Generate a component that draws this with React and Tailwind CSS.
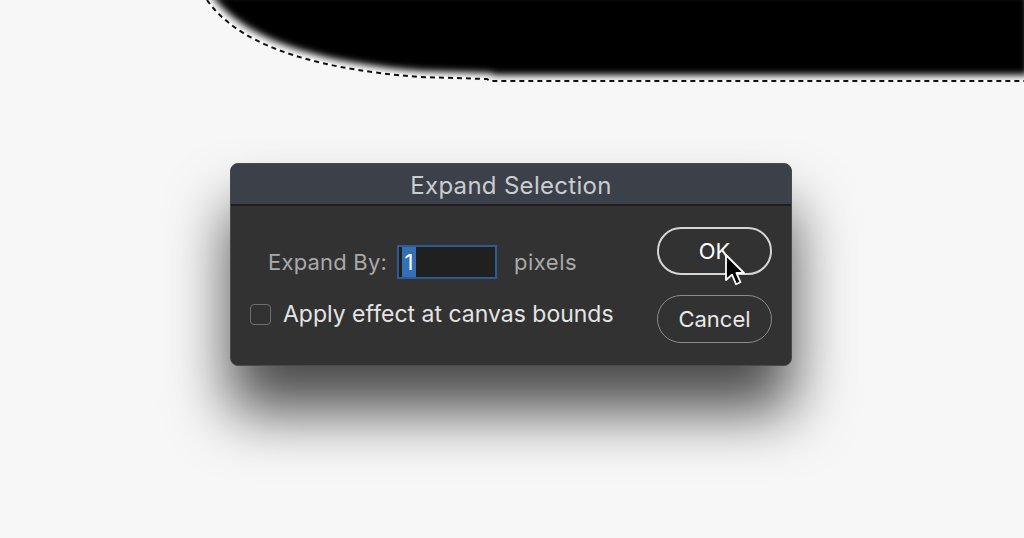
import React from 'react';

const font = { fontFamily: 'Inter, "Noto Sans", sans-serif' };

function Selection() {
  const edge = 'M207 0 C 235 40, 300 68, 420 77 L 487 79 L 490 81 L 1024 81';
  return (
    <svg className="absolute left-0 top-0" width="1024" height="100" viewBox="0 0 1024 100">
      <defs>
        <filter id="soft" x="-10%" y="-50%" width="120%" height="200%">
          <feGaussianBlur stdDeviation="3.5" />
        </filter>
      </defs>
      <path d={`${edge} L 1024 0 Z`} fill="#000" filter="url(#soft)" transform="translate(4 -6)" />
      <path d={edge} fill="none" stroke="#fff" strokeWidth="2" />
      <path d={edge} fill="none" stroke="#111" strokeWidth="2" strokeDasharray="5 4" />
    </svg>
  );
}

function Cursor() {
  return (
    <svg className="absolute left-[724px] top-[253px]" width="24" height="34" viewBox="0 0 12 17">
      <path d="M1 1 L1 13.5 L4 10.8 L6 15.6 L8.2 14.6 L6.2 10 L10 10 Z" fill="#000" stroke="#fff" strokeWidth="0.9" strokeLinejoin="round" />
    </svg>
  );
}

export default function App() {
  return (
    <div className="relative w-[1024px] h-[538px] overflow-hidden bg-[#f7f7f7]" style={font}>
      <Selection />
      <div className="pt-[163px] pl-[230px]">
        <div className="w-[562px] h-[203px] rounded-[8px] overflow-hidden border border-[#4a4a4a] bg-[#323232] shadow-[0_45px_60px_rgba(0,0,0,0.7)]">
          <div className="h-[42px] pt-[3px] bg-[#3c4048] border-b-2 border-[#1e1e1e] flex items-center justify-center">
            <span className="text-[24px] text-[#c9cdd3] tracking-[0.3px]">Expand Selection</span>
          </div>
          <div className="flex items-start pt-[21px] pl-[19px] pr-[19px]">
            <div className="flex-1 pt-[11px]">
              <div className="flex items-center pl-[18px] h-[48px]">
                <span className="text-[22px] text-[#a9a9a9] tracking-[0.2px]">Expand By:</span>
                <div className="ml-[10px] w-[100px] h-[34px] border-2 border-[#2d5b96] bg-[#202020] flex items-center pl-[3px]">
                  <span className="h-[30px] w-[14px] bg-[#3670b4] text-white text-[22px] leading-[30px] flex items-center justify-center">1</span>
                </div>
                <span className="ml-[17px] text-[22px] text-[#a9a9a9] tracking-[0.5px]">pixels</span>
              </div>
              <div className="flex items-center mt-[11px]">
                <span className="w-[21px] h-[21px] rounded-[4px] border-[1.5px] border-[#6e6e6e]" />
                <span className="ml-[12px] text-[23px] text-[#e4e4e4]">Apply effect at canvas bounds</span>
              </div>
            </div>
            <div className="flex flex-col gap-[20px] w-[115px]">
              <div className="h-[48px] rounded-full border-2 border-[#d6d6d6] flex items-center justify-center text-[22px] text-white">OK</div>
              <div className="h-[48px] rounded-full border-[1.5px] border-[#8a8a8a] flex items-center justify-center text-[22px] text-[#e8e8e8]">Cancel</div>
            </div>
          </div>
        </div>
      </div>
      <Cursor />
    </div>
  );
}
